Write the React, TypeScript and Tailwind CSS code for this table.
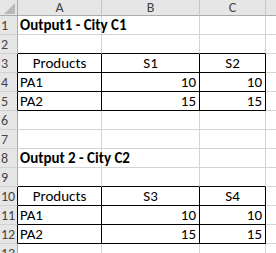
import React from "react";

type Cell = { t?: string; align?: "l" | "c" | "r"; bold?: boolean };

const rows: Cell[][] = [
  [{ t: "Output1 - City C1", bold: true, align: "l" }, {}, {}],
  [{}, {}, {}],
  [{ t: "Products", align: "c" }, { t: "S1", align: "c" }, { t: "S2", align: "c" }],
  [{ t: "PA1", align: "l" }, { t: "10", align: "r" }, { t: "10", align: "r" }],
  [{ t: "PA2", align: "l" }, { t: "15", align: "r" }, { t: "15", align: "r" }],
  [{}, {}, {}],
  [{}, {}, {}],
  [{ t: "Output 2 - City C2", bold: true, align: "l" }, {}, {}],
  [{}, {}, {}],
  [{ t: "Products", align: "c" }, { t: "S3", align: "c" }, { t: "S4", align: "c" }],
  [{ t: "PA1", align: "l" }, { t: "10", align: "r" }, { t: "10", align: "r" }],
  [{ t: "PA2", align: "l" }, { t: "15", align: "r" }, { t: "15", align: "r" }],
  [{}, {}, {}],
];

const tableRows = new Set([3, 4, 5, 10, 11, 12]);
const topRows = new Set([2, 9]);

const widths = ["w-[84px]", "w-[98px]", "w-[66px]"];

export default function App() {
  return (
    <div
      className="w-[276px] h-[253px] overflow-hidden bg-white text-[15px] text-black"
      style={{ fontFamily: "Carlito, Lato, 'Liberation Sans', sans-serif" }}
    >
      <div className="flex h-[16px]">
        <div className="w-[18px] shrink-0 bg-[#e6e6e6] border-r border-b border-[#ababab] relative">
          <svg width="18" height="16" className="absolute left-0 top-0">
            <polygon points="4,14 15,14 15,3" fill="#b9b9b9" />
          </svg>
        </div>
        {["A", "B", "C"].map((c, i) => (
          <div
            key={c}
            className={`${widths[i]} shrink-0 bg-[#e6e6e6] border-r border-r-[#c6c6c6] border-b border-b-[#ababab] flex items-center justify-center text-[14px] leading-none text-[#444]`}
          >
            {c}
          </div>
        ))}
        <div className="flex-1 bg-[#e6e6e6] border-b border-[#ababab]" />
      </div>
      {rows.map((r, ri) => {
        const n = ri + 1;
        const inTable = tableRows.has(n);
        const isTop = topRows.has(n);
        return (
          <div key={n} className="flex h-[19px]">
            <div
              className={`w-[18px] shrink-0 bg-[#e6e6e6] border-r border-b border-b-[#d0d0d0] ${
                inTable ? "border-r-black" : "border-r-[#ababab]"
              } flex items-center pl-[1px] pt-[1px] text-[14px] leading-none text-[#444] whitespace-nowrap overflow-hidden`}
            >
              {n}
            </div>
            {r.map((c, ci) => {
              const bottomBlack = inTable || isTop;
              const rightBlack = inTable;
              const al =
                c.align === "c" ? "justify-center" : c.align === "r" ? "justify-end pr-[3px]" : "justify-start pl-[2px]";
              return (
                <div
                  key={ci}
                  className={`${widths[ci]} shrink-0 border-r border-b ${
                    rightBlack ? "border-r-black" : "border-r-[#d4d4d4]"
                  } ${bottomBlack ? "border-b-black" : "border-b-[#d4d4d4]"} flex items-center pt-[1px] ${al} leading-none whitespace-nowrap ${
                    c.bold ? "font-bold" : ""
                  } ${ci === 0 && c.bold ? "overflow-visible" : "overflow-hidden"}`}
                >
                  {c.t}
                </div>
              );
            })}
            <div className="flex-1 border-b border-[#d4d4d4]" />
          </div>
        );
      })}
    </div>
  );
}
